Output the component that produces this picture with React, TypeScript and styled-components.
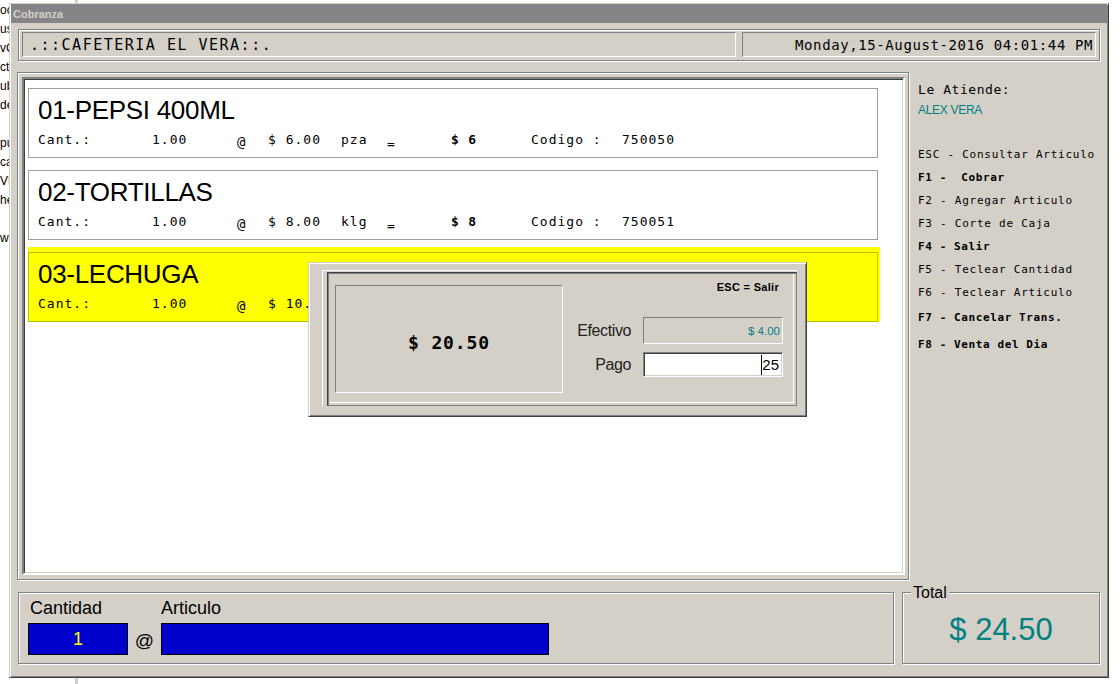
import React from "react";
import styled, { createGlobalStyle } from "styled-components";

const MONO = `"DejaVu Sans Mono", "Liberation Mono", monospace`;
const SANS = `"Liberation Sans", Arial, sans-serif`;

const GlobalStyle = createGlobalStyle`
  html, body {
    margin: 0;
    padding: 0;
    background: #fff;
  }
  body {
    width: 1120px;
    height: 684px;
    overflow: hidden;
    font-family: ${SANS};
  }
  * {
    box-sizing: border-box;
  }
`;

type Item = {
  name: string;
  qty: string;
  price: string;
  unit: string;
  total: string;
  sku: string;
  selected?: boolean;
};

const items: Item[] = [
  { name: "01-PEPSI 400ML", qty: "1.00", price: "$ 6.00", unit: "pza", total: "$ 6", sku: "750050" },
  { name: "02-TORTILLAS", qty: "1.00", price: "$ 8.00", unit: "klg", total: "$ 8", sku: "750051" },
  { name: "03-LECHUGA", qty: "1.00", price: "$ 10.50", unit: "pza", total: "$ 10.5", sku: "750052", selected: true },
];

const shortcuts = [
  { text: "ESC - Consultar Articulo" },
  { text: "F1 -  Cobrar", bold: true },
  { text: "F2 - Agregar Articulo" },
  { text: "F3 - Corte de Caja" },
  { text: "F4 - Salir", bold: true },
  { text: "F5 - Teclear Cantidad" },
  { text: "F6 - Teclear Articulo" },
  { text: "F7 - Cancelar Trans.", bold: true, gap: 2 },
  { text: "F8 - Venta del Dia", bold: true, gap: 4 },
];

const scraps = ["oc", "us", "vC", "ct", "ub", "de", "", "pu", "ca", "VD", "he", "", "wo"];

const App = () => {
  return (
    <>
      <GlobalStyle />
      <Desktop>
        <Scraps>
          {scraps.map((s, i) => (
            <ScrapLine key={`scrap_${i}`}>{s}</ScrapLine>
          ))}
        </Scraps>
        <BackWindow />
        <Window>
          <TitleBar>Cobranza</TitleBar>
          <WindowBody>
            <HeaderFrame>
              <ShopName>.::CAFETERIA EL VERA::.</ShopName>
              <DateBox>Monday,15-August-2016 04:01:44 PM</DateBox>
            </HeaderFrame>

            <MainRow>
              <ListFrame>
                <ListBox>
                  {items.map((item) => (
                    <ItemCard key={item.sku} $selected={item.selected}>
                      <ItemName>{item.name}</ItemName>
                      <ItemDetails>
                        <span>Cant.:</span>
                        <span>{item.qty}</span>
                        <AtSign>@</AtSign>
                        <span>{item.price}</span>
                        <span>{item.unit}</span>
                        <Equals>=</Equals>
                        <b>{item.total}</b>
                        <span>Codigo :</span>
                        <span>{item.sku}</span>
                      </ItemDetails>
                    </ItemCard>
                  ))}
                </ListBox>
              </ListFrame>

              <SidePanel>
                <AttendLabel>Le Atiende:</AttendLabel>
                <Cashier>ALEX VERA</Cashier>
                <ShortcutList>
                  {shortcuts.map((s) => (
                    <Shortcut key={s.text} $bold={s.bold} $gap={s.gap ?? 0}>
                      {s.text}
                    </Shortcut>
                  ))}
                </ShortcutList>
              </SidePanel>
            </MainRow>

            <BottomRow>
              <EntryFrame>
                <EntryGrid>
                  <EntryLabel $indent={2}>Cantidad</EntryLabel>
                  <span />
                  <EntryLabel $indent={0}>Articulo</EntryLabel>
                  <BlueField>1</BlueField>
                  <EntryAt>@</EntryAt>
                  <BlueField />
                </EntryGrid>
              </EntryFrame>
              <TotalFrame>
                <TotalLegend>Total</TotalLegend>
                <TotalValue>$ 24.50</TotalValue>
              </TotalFrame>
            </BottomRow>
          </WindowBody>
        </Window>

        <PayDialog>
          <DialogEtch>
            <DialogInner>
              <AmountBox>$ 20.50</AmountBox>
              <PayColumn>
                <EscHint>ESC = Salir</EscHint>
                <FieldGrid>
                  <FieldLabel>Efectivo</FieldLabel>
                  <ReadonlyField>$ 4.00</ReadonlyField>
                  <FieldLabel>Pago</FieldLabel>
                  <InputField>
                    <Caret />
                    25
                  </InputField>
                </FieldGrid>
              </PayColumn>
            </DialogInner>
          </DialogEtch>
        </PayDialog>
      </Desktop>
    </>
  );
};

export default App;

const Desktop = styled.div`
  position: relative;
  width: 1120px;
  height: 684px;
  overflow: hidden;
  background: #fff;
`;

const Scraps = styled.div`
  position: absolute;
  left: 0;
  top: 1px;
  font: 12px/19px ${SANS};
  color: #000;
`;

const ScrapLine = styled.div`
  height: 19px;
  white-space: nowrap;
`;

const BackWindow = styled.div`
  position: absolute;
  left: 75px;
  top: -4px;
  width: 1100px;
  height: 700px;
  border-left: 3px solid #d4d0c8;
  background: #fff;
`;

const Window = styled.div`
  position: absolute;
  left: 9px;
  top: 3px;
  width: 1100px;
  height: 675px;
  display: flex;
  flex-direction: column;
  padding: 0 1px 1px 1px;
  background: #d4d0c8;
  border: 1px solid;
  border-color: #d4d0c8 #404040 #404040 #d4d0c8;
  box-shadow: inset 1px 1px 0 #fff, inset -1px -1px 0 #808080;
`;

const TitleBar = styled.div`
  height: 19px;
  display: flex;
  align-items: center;
  padding-left: 2px;
  background: #868486;
  color: #d4d0c8;
  font: bold 11px ${SANS};
`;

const WindowBody = styled.div`
  flex: 1;
  display: flex;
  flex-direction: column;
  padding: 6px 7px 0 6px;
`;

const Etched = styled.div`
  border: 1px solid #808080;
  box-shadow: inset 1px 1px 0 #fff, 1px 1px 0 #fff;
`;

const HeaderFrame = styled(Etched)`
  height: 32px;
  margin-left: 1px;
  display: flex;
  align-items: flex-start;
  gap: 6px;
  padding: 2px 3px 0 3px;
`;

const Sunken = styled.div`
  height: 25px;
  display: flex;
  align-items: center;
  border: 1px solid;
  border-color: #808080 #fff #fff #808080;
  font-family: ${MONO};
  color: #000;
  white-space: pre;
`;

const ShopName = styled(Sunken)`
  width: 714px;
  padding-left: 7px;
  font-size: 15px;
  letter-spacing: 1.5px;
`;

const DateBox = styled(Sunken)`
  flex: 1;
  justify-content: flex-end;
  padding-right: 2px;
  font-size: 14px;
  letter-spacing: 0.6px;
`;

const MainRow = styled.div`
  margin-top: 11px;
  height: 508px;
  display: flex;
`;

const ListFrame = styled(Etched)`
  width: 892px;
  display: flex;
  padding: 4px 3px 4px 4px;
`;

const ListBox = styled.div`
  flex: 1;
  display: flex;
  flex-direction: column;
  gap: 12px;
  padding: 9px 25px 0 4px;
  background: #fff;
  border: 2px solid;
  border-color: #808080 #fff #fff #808080;
  box-shadow: inset 1px 1px 0 #404040, inset -1px -1px 0 #d4d0c8;
`;

const ItemCard = styled.div<{ $selected?: boolean }>`
  height: 70px;
  padding: 6px 0 0 9px;
  border: 1px solid ${(p) => (p.$selected ? "#bcbc00" : "#a0a0a0")};
  background: ${(p) => (p.$selected ? "#ffff00" : "#fff")};
  box-shadow: ${(p) =>
    p.$selected
      ? "0 -5px 0 #ffff00, 2px 0 0 #ffff00, 2px -5px 0 #ffff00"
      : "none"};
`;

const ItemName = styled.div`
  font: 26px/30px ${SANS};
  letter-spacing: -0.3px;
  color: #000;
`;

const ItemDetails = styled.div`
  margin-top: 7px;
  display: grid;
  grid-template-columns: 114px 85px 31px 73px 46px 64px 80px 91px auto;
  font: 13px/16px ${MONO};
  letter-spacing: 1px;
  color: #000;
  white-space: pre;

  b {
    font-weight: bold;
    letter-spacing: 0.8px;
  }
`;

const AtSign = styled.span`
  font-size: 14px;
  padding-top: 2px;
`;

const Equals = styled.span`
  padding-top: 4px;
`;

const SidePanel = styled.div`
  flex: 1;
  padding: 10px 0 0 9px;
  display: flex;
  flex-direction: column;
`;

const AttendLabel = styled.div`
  font: 13px/16px ${MONO};
  letter-spacing: 0.55px;
  color: #000;
`;

const Cashier = styled.div`
  margin-top: 5px;
  font: 12px/14px ${SANS};
  letter-spacing: -0.3px;
  color: #008080;
`;

const ShortcutList = styled.div`
  margin-top: 26px;
  display: flex;
  flex-direction: column;
`;

const Shortcut = styled.div<{ $bold?: boolean; $gap: number }>`
  height: 23px;
  margin-top: ${(p) => p.$gap}px;
  display: flex;
  align-items: center;
  font: ${(p) => (p.$bold ? "bold" : "normal")} 11px ${MONO};
  letter-spacing: ${(p) => (p.$bold ? "0.6px" : "0.75px")};
  color: #000;
  white-space: pre;
`;

const BottomRow = styled.div`
  margin-top: 12px;
  height: 72px;
  display: flex;
  gap: 8px;
`;

const EntryFrame = styled(Etched)`
  width: 876px;
  margin-left: 1px;
  padding: 5px 0 0 9px;
`;

const EntryGrid = styled.div`
  display: grid;
  grid-template-columns: 100px 33px 388px;
  grid-template-rows: 20px 32px;
  row-gap: 5px;
`;

const EntryLabel = styled.div<{ $indent: number }>`
  padding-left: ${(p) => p.$indent}px;
  font: 18px/20px ${SANS};
  color: #000;
`;

const BlueField = styled.div`
  display: flex;
  align-items: center;
  justify-content: center;
  background: #0000cc;
  border: 1px solid #000;
  color: #ffff00;
  font: 18px ${SANS};
`;

const EntryAt = styled.div`
  display: flex;
  align-items: center;
  justify-content: center;
  padding-top: 3px;
  font: 19px ${SANS};
  color: #000;
`;

const TotalFrame = styled(Etched)`
  flex: 1;
  position: relative;
  display: flex;
  align-items: center;
  justify-content: center;
  padding-top: 4px;
`;

const TotalLegend = styled.span`
  position: absolute;
  left: 8px;
  top: -8px;
  padding: 0 2px;
  background: #d4d0c8;
  font: 16px/16px ${SANS};
  color: #000;
`;

const TotalValue = styled.div`
  font: 31px ${SANS};
  color: #008080;
`;

const PayDialog = styled.div`
  position: absolute;
  left: 308px;
  top: 262px;
  width: 499px;
  height: 155px;
  display: flex;
  padding: 7px 9px 10px 13px;
  background: #d4d0c8;
  border: 1px solid;
  border-color: #d4d0c8 #404040 #404040 #d4d0c8;
  box-shadow: inset 1px 1px 0 #fff, inset -1px -1px 0 #808080;
`;

const DialogEtch = styled.div`
  flex: 1;
  display: flex;
  padding: 1px 0 0 4px;
  border-left: 1px solid #fff;
  border-top: 1px solid #fff;
`;

const DialogInner = styled.div`
  flex: 1;
  display: flex;
  padding: 12px 0 0 7px;
  border: 1px solid;
  border-color: #404040 #808080 #808080 #404040;
  box-shadow: inset 1px 1px 0 #808080, inset -2px -2px 0 #d4d0c8,
    inset -3px -3px 0 #fff;
`;

const AmountBox = styled.div`
  width: 228px;
  height: 108px;
  display: flex;
  align-items: center;
  justify-content: center;
  padding-top: 6px;
  border: 1px solid;
  border-color: #808080 #fff #fff #808080;
  font: bold 18px ${MONO};
  letter-spacing: 0.9px;
  color: #000;
`;

const PayColumn = styled.div`
  flex: 1;
  margin-top: -4px;
  display: flex;
  flex-direction: column;
`;

const EscHint = styled.div`
  padding-right: 17px;
  text-align: right;
  font: bold 11px/13px ${SANS};
  letter-spacing: 0.3px;
  color: #000;
`;

const FieldGrid = styled.div`
  margin-top: 23px;
  padding-right: 13px;
  display: grid;
  grid-template-columns: 1fr 140px;
  grid-template-rows: 27px 25px;
  column-gap: 12px;
  row-gap: 8px;
`;

const FieldLabel = styled.div`
  align-self: center;
  text-align: right;
  font: 16px ${SANS};
  letter-spacing: -0.4px;
  color: #222;
`;

const ReadonlyField = styled.div`
  display: flex;
  align-items: center;
  justify-content: flex-end;
  padding-right: 2px;
  background: #d4d0c8;
  border: 1px solid;
  border-color: #808080 #fff #fff #808080;
  font: 11.5px ${SANS};
  color: #008080;
`;

const InputField = styled.div`
  display: flex;
  align-items: center;
  justify-content: flex-end;
  padding-right: 3px;
  background: #fff;
  border: 1px solid;
  border-color: #808080 #fff #fff #808080;
  box-shadow: inset 1px 1px 0 #404040, inset -1px -1px 0 #d4d0c8;
  font: 15px ${SANS};
  color: #000;
`;

const Caret = styled.span`
  display: inline-block;
  width: 0;
  height: 20px;
  border-left: 1px solid #000;
`;
